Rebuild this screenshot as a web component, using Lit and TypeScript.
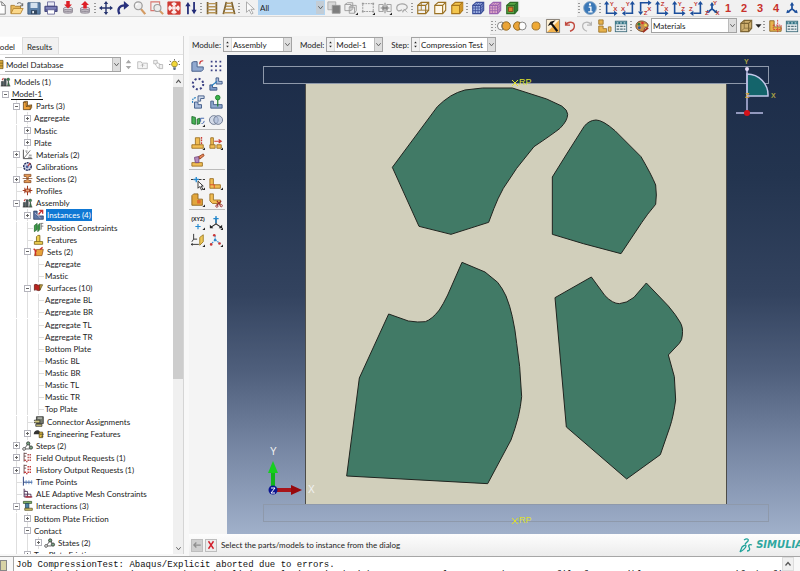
import { LitElement, html, svg, css, nothing, type TemplateResult } from "lit";
import { customElement, property } from "lit/decorators.js";
import { classMap } from "lit/directives/class-map.js";

type Drawing = TemplateResult;

/* ---- shared fragments used by several icons (16 x 16 grid) ---- */
const database = svg`
  <path d="M3 8.5v4.5c0 1.2 10 1.2 10 0V8.500z" fill="#c9c4cc" stroke="#77707c" stroke-width=".8"/>
  <ellipse cx="8" cy="8.500" rx="5" ry="1.500" fill="#e3dfe6" stroke="#77707c" stroke-width=".8"/>
  <path d="M3 11c0 1.200 10 1.200 10 0" fill="none" stroke="#77707c" stroke-width=".8"/>`;

const axesUp = (a: string, b: string) => svg`
  <path d="M3 14V3M2 14h10" stroke="#1c4f9c" stroke-width="1.800" fill="none"/>
  <path d="M0 4l3-4 3 4zM11.500 11l4 3-4 3z" fill="#1c4f9c"/>
  <text x="6.500" y="6" class="glyph">${a}</text><text x="10.500" y="11" class="glyph">${b}</text>`;
const axesLeft = (a: string, b: string) => svg`
  <path d="M13 14V3M14 14H5" stroke="#1c4f9c" stroke-width="1.800" fill="none"/>
  <path d="M10 4l3-4 3 4zM5 11l-4 3 4 3z" fill="#1c4f9c"/>
  <text x="5.500" y="6" class="glyph">${a}</text><text x="0" y="11" class="glyph">${b}</text>`;
const axesDown = (a: string, b: string) => svg`
  <path d="M3 2v10M2 2h10" stroke="#1c4f9c" stroke-width="1.800" fill="none"/>
  <path d="M0 12l3 4 3-4zM11.500-1l4 3-4 3z" fill="#1c4f9c"/>
  <text x="6.500" y="16" class="glyph">${a}</text><text x="10.500" y="11" class="glyph">${b}</text>`;
const cube = (fill: string, line: string) => svg`
  <path d="M2 5l4-3.500h8.500v9L11 14.500H2z" fill="${fill}" stroke="${line}" stroke-width="1.300"/>
  <path d="M2 5h9v9.500M11 5l3.500-3.500" fill="none" stroke="${line}" stroke-width="1.300"/>`;
const meshCube = (fill: string, line: string) => svg`
  ${cube(fill, line)}
  <path d="M5 5v9.500M8 5v9.500M2 8h9l3.500-3M2 11h9l3.500-3M5 5l3.500-3.500M8 5l3.500-3.500M12.800 3.500v9" fill="none" stroke="${line}" stroke-width=".9"/>`;
const triad = svg`
  <path d="M8 9V3M8 9l-4.500 3.500M8 9l4.500 3.500" stroke="#1c4f9c" stroke-width="2"/>
  <path d="M5.500 5L8 1l2.500 4zM1.500 14l1-4 3 3zM14.500 14l-1-4-3 3z" fill="#1c4f9c"/>`;
const table = svg`
  <rect x="1.500" y="2.500" width="13" height="12" fill="#e6edf0" stroke="#3f6d7c"/>
  <path d="M1.500 3h13v3h-13z" fill="#2f7385"/><path d="M3 4.500h2M7 4.500h2M11 4.500h2" stroke="#fff"/>
  <path d="M3 8.500h3M3 11.500h3M7 8.500h3M7 11.500h3M11 8.500h2M11 11.500h2" stroke="#54707a" stroke-width="1.500"/>`;
const more = svg`<path d="M16 13v3h-3z" fill="#222"/>`;
const columns = svg`
  <path d="M2 14V8h3v6zM6 14V4h3v10z" fill="#4a5a5f" stroke="#222" stroke-width=".7"/>
  <path d="M1 14.500h14" stroke="#222"/><path d="M3 6l2-3" stroke="#c43b3b" stroke-width="1.500"/>
  <path d="M11 14l1-7 2 7z" fill="#3c8c53" stroke="#222" stroke-width=".7"/><circle cx="12" cy="5" r="2" fill="#3c8c53" stroke="#222" stroke-width=".6"/>`;
const steps = svg`
  <path d="M4 12l5-7 4 6M5 13h6" stroke="#222" fill="none"/>
  <circle cx="3" cy="13" r="2" fill="#fff" stroke="#222"/><circle cx="9" cy="5" r="2.400" fill="#7aa383" stroke="#222"/>
  <circle cx="13" cy="11" r="2.400" fill="#7aa383" stroke="#222"/>`;
const request = (c: string) => svg`
  <path d="M3 1v13M3 2h4M3 6h3" stroke="#5a3a3a" fill="none" stroke-width="1.200"/>
  <path d="M8 4h6M8 8h6M8 12h6M6 14h2" stroke="${c}" stroke-width="2" stroke-dasharray="2 1"/>
  <path d="M3 12h3" stroke="${c}" stroke-width="2"/>`;
const partL = (fill: string, line: string) => svg`
  <path d="M2 3l2-1h4v6l6-1v4l-2 3H2z" fill="${fill}" stroke="${line}"/>
  <path d="M2 3.500h4v6h6V14M6 9.500l2-1.500M12 9.500l2-2" fill="none" stroke="${line}" stroke-width=".8"/>`;

const drawings: Record<string, Drawing> = {
  page: svg`<path d="M3 1h7l4 4v10H3z" fill="#fdfdfd" stroke="#777"/><path d="M10 1v4h4" fill="none" stroke="#777"/>`,
  open: svg`<path d="M1 14V5h4l1 1h6v3" fill="#e8b95c" stroke="#a97a2b"/><path d="M1 14.500L4 8.500h11l-3 6z" fill="#fbd88a" stroke="#b5832f"/><path d="M8 3c3-2 5-1 6 2M14.500 2.500v3h-3" fill="none" stroke="#555"/>`,
  save: svg`<path d="M1 2h14v13H1z" fill="#5c80a8" stroke="#39577a"/><path d="M4 2h8v6H4z" fill="#d4e1ee"/><path d="M4.500 10.500h7V15h-7z" fill="#33475f"/><path d="M6 11.500h2V14H6z" fill="#e3e9f0"/>`,
  print: svg`<path d="M4 1h8v5H4z" fill="#e9eaf5" stroke="#6a6a9a"/><path d="M1 6h14v6H1z" fill="#5a5d9c" stroke="#3c3f74"/><path d="M4 10h8v5H4z" fill="#fff" stroke="#6a6a9a"/><path d="M2 8h12" stroke="#a9abd8"/>`,
  dbDown: svg`${database}<path d="M6 0h4v4h2.500L8 8.500 3.500 4H6z" fill="#dd1f26"/>`,
  dbUp: svg`${database}<path d="M6 8.500h4v-4h2.500L8 0 3.500 4.500H6z" fill="#dd1f26"/>`,
  move: svg`<path d="M8 2v12M2 8h12" stroke="#27356f" stroke-width="1.600"/><path d="M5.500 3.500L8 0l2.500 3.500zM5.500 12.500L8 16l2.500-3.500zM3.500 5.500L0 8l3.500 2.500zM12.500 5.500L16 8l-3.500 2.500z" fill="#27356f"/>`,
  rotate: svg`<path d="M4 15C1 9 4 5 10 5" fill="none" stroke="#27307c" stroke-width="2.600"/><path d="M9 0l6 5-6 5z" fill="#27307c"/>`,
  zoom: svg`<path d="M9 9l5 6" stroke="#d49b63" stroke-width="2.600"/><circle cx="6" cy="5.500" r="4.500" fill="#ececec" stroke="#9d9d9d" stroke-width="1.400"/><path d="M3.500 5c.5-1.500 1.500-2 2.500-2" stroke="#fff" stroke-width="1.300" fill="none"/>`,
  zoomBox: svg`<path d="M1 1h10v10H1z" fill="none" stroke="#d8766f" stroke-width="1.200"/><path d="M11 11l4 4" stroke="#d49b63" stroke-width="2.400"/><circle cx="8.500" cy="8" r="4" fill="#ececec" stroke="#9d9d9d" stroke-width="1.300"/>`,
  fit: svg`<path d="M1 1h14v14H1z" fill="#fbeeec" stroke="#cf3a32"/><path d="M3 3l10 10M13 3L3 13" stroke="#cf3a32" stroke-width="2"/><path d="M1 1h6L1 7zM15 1v6L9 1zM1 15V9l6 6zM15 15H9l6-6z" fill="#cf3a32"/><path d="M6 6h4v4H6z" fill="#fbeeec"/>`,
  upDown: svg`<path d="M4.500 15V4M11.500 1v11" stroke="#222b77" stroke-width="2"/><path d="M1.500 6l3-5 3 5zM8.500 10l3 5 3-5z" fill="#222b77"/>`,
  ladder: svg`<path d="M3 1v14M13 1v14" stroke="#7d6230" stroke-width="2"/><path d="M3 3h10M3 6.500h10M3 10h10M3 13.500h10" stroke="#b89556" stroke-width="1.600"/>`,
  ladderFar: svg`<path d="M5 1L1.500 15M11 1l3.500 14" stroke="#7d6230" stroke-width="2"/><path d="M5 2.500h6M4.500 6h7M3 9.500h10M2 13.500h12" stroke="#b89556" stroke-width="1.600"/>`,
  cursor: svg`<path d="M4 1v12l3-3 2.500 5 2-1L9 9.500h4z" fill="#fafafa" stroke="#a3a3a3"/>`,
  squares: svg`<path d="M1 1h9v9H1z" fill="#d9d9d9" stroke="#aaa"/><path d="M6 5h9v9H6z" fill="#7e7e7e" stroke="#999"/>`,
  boxes: svg`<path d="M1 4l3-2h6v7l-2 2H1zM6 7l2-2h6v6l-2 3H6z" fill="#efefef" stroke="#999"/><path d="M1 4h7v7M6 7h6v7" fill="none" stroke="#999"/>${more}`,
  dashed: svg`<path d="M2 3h12v9H2z" fill="none" stroke="#8f8f8f" stroke-dasharray="2 1"/><path d="M1 2h2v2H1zM13 2h2v2h-2zM1 11h2v2H1zM13 11h2v2h-2z" fill="#999"/>${more}`,
  pair: svg`<path d="M1 4h5v8H1zM10 4h5v8h-5z" fill="none" stroke="#999"/><path d="M3 8h10M8 2v12" stroke="#777"/><path d="M5 5l3 3-3 3zM11 5L8 8l3 3z" fill="#888"/>${more}`,
  lasso: svg`<path d="M2 8c0-6 12-6 12-1 0 4-6 2-5 6M2 8c0 4 3 4 6 2" fill="none" stroke="#a5a5a5" stroke-width="1.400"/><path d="M10 9l4 4" stroke="#a5a5a5"/>`,
  cubeWire: svg`${cube("none", "#9b7224")}<path d="M6 1.500v9H2.500M6 10.500h8.500" fill="none" stroke="#9b7224"/>`,
  cubeHidden: cube("#fff8e8", "#9b7224"),
  cubeSolid: svg`${cube("#f3c64e", "#a8761c")}<path d="M11.500 5l3-3v8l-3 3.500z" fill="#cf9426"/>`,
  meshBlue: meshCube("#9fb2e4", "#3a4d98"),
  meshPurple: meshCube("#e0a9c6", "#9a62b0"),
  meshGreen: svg`${cube("#55a544", "#2d6b25")}<path d="M4 7h5v5H4z" fill="#d8812d" stroke="#8a3e18"/><path d="M11.500 5l3-3v8l-3 3.500z" fill="#2f7a32"/>`,
  info: svg`<circle cx="8" cy="8" r="7.300" fill="#3a78b8" stroke="#8ba9c6"/><path d="M6.500 7H9v5M6 12.500h5" stroke="#fff" stroke-width="1.500" fill="none"/><circle cx="8" cy="4" r="1.300" fill="#fff"/>`,
  viewXY: axesUp("Y", "X"), viewYX: axesLeft("Y", "X"), viewXZ: axesDown("Z", "X"),
  viewZX: axesUp("Z", "X"), viewYZ: axesUp("Y", "Z"), viewZY: axesLeft("Y", "Z"),
  iso: svg`${triad}<text x="9" y="5" class="glyph">Y</text><text x="0" y="16" class="glyph">Z</text><text x="12" y="16" class="glyph">X</text>`,
  triad,
  unionRight: svg`<circle cx="5" cy="8" r="4.500" fill="#fdfdfd" stroke="#777"/><circle cx="10.500" cy="8" r="4.800" fill="#eaa437" stroke="#8a6420"/><path d="M7 4.500c-2 2-2 5 0 7" stroke="#666" fill="none"/>`,
  unionLeft: svg`<circle cx="10.500" cy="8" r="4.500" fill="#fdfdfd" stroke="#777"/><path d="M8 4A4.800 4.800 0 1 0 8 12C6.500 10 6.500 6 8 4z" fill="#eaa437" stroke="#8a6420"/>`,
  disc: svg`<circle cx="8" cy="8" r="4.600" fill="#efa935" stroke="#916a2b"/>`,
  pick: svg`<path d="M.5.500h15v15H.5z" fill="#f2b24c" stroke="#777"/><path d="M1 1h14L1 15z" fill="#fdf0d4"/><path d="M13 14L6 5" stroke="#111" stroke-width="2.400"/><path d="M2 8l3-5 6-1.500L6.500 6z" fill="#111"/>`,
  undo: svg`<path d="M3 3v4h5M3 7c3-5 10-4 10 1 0 3-2 5-5 6" fill="none" stroke="#c14a3f" stroke-width="1.600"/>`,
  redo: svg`<path d="M13 3v4H8M13 7C10 2 3 3 3 8c0 3 2 5 5 6" fill="none" stroke="#b7b7b7" stroke-width="1.400"/>`,
  partsSet: svg`<path d="M2 1h5v5H2zM2 8h5v3h4v4H2z" fill="#e7b24b" stroke="#9c742b"/><path d="M13 9h3v5h-3z" fill="#efc469" stroke="#9c742b"/>`,
  table,
  palette: svg`<path d="M1 8C1 3 7 1 11 3c5 2 5 6 2 7-2 0-3 1-2 3 0 3-10 1-10-5z" fill="#c98f4d" stroke="#6b4420"/><circle cx="4.500" cy="6" r="1.600" fill="#2d7a3a"/><circle cx="8.500" cy="4.500" r="1.500" fill="#d8322a"/><circle cx="5" cy="10" r="1.600" fill="#2852a5"/><circle cx="12" cy="7" r="1.400" fill="#f2e04c"/><path d="M9 15l6-5" stroke="#a02d20" stroke-width="2"/>`,
  cubeTan: svg`${cube("#cfb070", "#7d6534")}<path d="M6 1.500v9l-4 4M6 10.500h8.500" stroke="#7d6534" fill="none" stroke-width=".8"/>`,
  cutPart: svg`<path d="M2 2h5v7h8v5H2z" fill="#e7b24b" stroke="#8a6526"/><path d="M11 1v14M6 7h9v5H6z" stroke="#d23c32" fill="none" stroke-dasharray="2 1"/>`,
  models: columns,
  part: svg`${partL("#efa23a", "#4f3410")}`,
  material: svg`<path d="M2 1v13h13" stroke="#333" fill="none" stroke-width="1.200"/><path d="M3 13L12 2M5 3h3M9 12h5M10 9h4M6 5l2 1" stroke="#444" fill="none"/>`,
  calibration: svg`<circle cx="8" cy="8" r="5.500" fill="#cfd6ea" stroke="#27305f" stroke-width="2" stroke-dasharray="3 1"/><path d="M8 8l4-5" stroke="#c32b2b" stroke-width="1.500"/><circle cx="7.500" cy="8.500" r="2" fill="#4b5d9a"/>`,
  section: svg`<path d="M3 2h10v3h-3l-1 2v3l1 1h3v3H3v-3h3l1-1V7L6 5H3z" fill="#e59b54" stroke="#7b3d19"/><path d="M1 8h14" stroke="#7b3d19"/>`,
  profile: svg`<path d="M8 1v14M1 8h14" stroke="#a13a1f" stroke-width="1.500"/><path d="M4 4v8M12 4v8M5 6h6v4H5z" fill="#e8a276" stroke="#a13a1f" stroke-width="1.300"/>`,
  instance: svg`<path d="M1 3h5v7h9v5H1z" fill="#5d76a5" stroke="#1f2f55"/><path d="M8 8l5-6M9 2h5v5" stroke="#c23434" stroke-width="2" fill="none"/><path d="M3 6l8 7" stroke="#d9d4e9"/>`,
  constraint: svg`<path d="M2 5l4-3v9l-4 3zM7 5l3-3v9l-3 3z" fill="#3d9f4a" stroke="#1d5c28"/><path d="M11 2h4M12 2v9M12 6h3" stroke="#555" fill="none"/>`,
  feature: svg`<path d="M2 11h12v4H2zM5 11V4l2-2h3v9" fill="#f0d054" stroke="#7c6517" stroke-width="1.200"/>`,
  set: svg`<path d="M2 14L5 5h10l-2 9z" fill="#e7a23a" stroke="#8f4c17"/><path d="M1 4l4 4M4 14L3 5M10 5l4-3" stroke="#c9302a" stroke-width="2"/>`,
  surface: svg`<path d="M2 4c3-2 5 2 8 0v8c-3 2-5-2-8 0z" fill="#b8241f" stroke="#5d120f"/><path d="M10 4h4l-4 8z" fill="#d6b34d" stroke="#54420f"/>`,
  connector: svg`<path d="M5 1h10v10H5z" fill="#777c70" stroke="#222"/><path d="M2 6h8v4H2zM4 12h9v3H4z" fill="#d0c77e" stroke="#222"/><path d="M7 3h6M0 8h3" stroke="#fff"/>`,
  engineering: svg`<path d="M1 9c0-6 8-8 9-3v3z" fill="#333"/><path d="M9 6h5v8H9z" fill="#e3be3e" stroke="#433609"/><path d="M10 9h6M12 12h3" stroke="#333"/>`,
  steps, field: request("#b34848"), history: request("#c02f2f"),
  time: svg`<path d="M2 1v13M2 9h13" stroke="#27407c" fill="none" stroke-width="1.400"/><path d="M6 6v6M10 6v6M14 6v6" stroke="#4b7fc3"/>`,
  mesh: svg`<path d="M3 1v12h12M3 5h5v8M3 9h10v4" stroke="#4a3350" fill="#c9aeca" stroke-width="1.200"/><path d="M5 13h9" stroke="#b6303e" stroke-width="2"/>`,
  interaction: svg`<path d="M2 2h12v3H2z" fill="#86b46a" stroke="#2c4a22"/><path d="M5 5h5v7H5z" fill="#4c84a4" stroke="#1b3d50"/><path d="M4 12h11v3H4z" fill="#cfc56a" stroke="#4e481a"/>`,
  spin: svg`<path d="M4 6l4-5 4 5zM4 10l4 5 4-5z" fill="#a8a8a8"/>`,
  folderUp: svg`<path d="M1 4h5l1 2h8v8H1z" fill="#f4f4f4" stroke="#a9a9a9"/><path d="M8 12V8M6 9.500l2-2 2 2" stroke="#999" fill="none"/>`,
  filter: svg`<path d="M1 2h5v5H1zM9 8h5v6H9z" fill="#f0f0f0" stroke="#aaa"/><path d="M6 5l5 3M3 7l4 6h2" stroke="#aaa" fill="none"/>`,
  bulb: svg`<path d="M8 0v2M1 3l2 1M15 3l-2 1M0 8h2M14 8h2" stroke="#333"/><path d="M8 3a4.500 4.500 0 0 1 2.500 8h-5A4.500 4.500 0 0 1 8 3z" fill="#f2d83a" stroke="#7c6a14"/><path d="M6 13h4M6.500 15h3" stroke="#27405d" stroke-width="1.500"/>`,
  stack: svg`<path d="M4 2h12v12H4z" fill="#d9a93b" stroke="#6b5117"/><path d="M4 6h12M4 10h12" stroke="#6b5117"/>`,
  tInstance: svg`<path d="M1 4l2-1h4v6h7v3l-2 2H1z" fill="#91a9cf" stroke="#3c5684"/><path d="M10 6c0-3 1-4 4-4" stroke="#c93636" stroke-width="1.300" fill="none"/>`,
  tLinear: svg`<g fill="#3b4184"><path d="M2 2h2v2H2zM7 2h2v2H7zM12 2h2v2h-2zM2 7h2v2H2zM7 7h2v2H7zM12 7h2v2h-2zM2 12h2v2H2zM7 12h2v2H7zM12 12h2v2h-2z"/></g>`,
  tRadial: svg`<circle cx="8" cy="8" r="6" fill="none" stroke="#3b4184" stroke-width="2.300" stroke-dasharray="2.300 2.400"/>`,
  tTranslate: svg`<path d="M8 1h3v4h4v3H8z" fill="#a9bcdb" stroke="#3c5684"/><path d="M1 9h3v3h5v3H1z" fill="#7f9cc9" stroke="#3c5684"/><path d="M3 10l6-5" stroke="#237ec0" stroke-width="1.300"/>`,
  tRotate: svg`<path d="M8 1h7v3h-4v3H8z" fill="#cfdaea" stroke="#3c5684"/><path d="M4 8h4v3h4v4H4z" fill="#a9bcdb" stroke="#3c5684"/><path d="M2 9c-1-4 1-6 4-6" stroke="#237ec0" stroke-width="1.300" stroke-dasharray="2 1" fill="none"/>`,
  tPoint: svg`<path d="M2 7h3v4h10v4H2z" fill="#91a9cf" stroke="#3c5684"/><path d="M10 5v8" stroke="#1a7a2a" stroke-width="1.300"/><circle cx="10" cy="3" r="2.600" fill="#3cb44a" stroke="#1a7a2a"/>`,
  tConstraint: svg`<path d="M1 4l4 1v8l-4-1z" fill="#49b356" stroke="#1d6b2a"/><path d="M7 7l3-1v6l-3 1z" fill="#49b356" stroke="#1d6b2a"/><path d="M11 10V6h4M12 12c2 0 3-1 3-3" stroke="#335aa8" fill="none"/>${more}`,
  tMerge: svg`<circle cx="5.500" cy="8" r="5" fill="#d4dbe8" stroke="#66728c"/><circle cx="10.500" cy="8" r="5" fill="#a9b8d6" fill-opacity=".6" stroke="#66728c"/>`,
  tExtrude: svg`<path d="M1 10h13v4H1zM5 10V2h5v8" fill="#f1bd53" stroke="#9a6f22"/><path d="M12 1v8" stroke="#cb3b34" stroke-dasharray="2 1" stroke-width="1.500"/>${more}`,
  tExtend: svg`<path d="M1 10h6v4H1zM2 10V2h3v8M9 10h5v4H9z" fill="#f1bd53" stroke="#9a6f22"/><path d="M6 6h7M11 4l3 2-3 2" stroke="#cb3b34" fill="none" stroke-width="1.300"/>${more}`,
  tSweep: svg`<path d="M1 11h12v4H1z" fill="#f1bd53" stroke="#9a6f22"/><path d="M4 5l5-1v7H5z" fill="#b58bbd" stroke="#74477d"/><path d="M9 4l5-3 1 2-5 4z" fill="#e5895b" stroke="#96421e"/>`,
  tDatum: svg`<path d="M0 4h16" stroke="#222" stroke-dasharray="3 1.500"/><path d="M6 1v6M3 4h6" stroke="#2489cf" stroke-width="1.500"/><path d="M8 6v8l2-2 2 4 1.500-1-2-3.500H14z" fill="#fff" stroke="#222"/>${more}`,
  tPartition: svg`<path d="M1 3h4v7h8v4H1z" fill="#f1bd53" stroke="#9a6f22"/><path d="M1 10h5v4" stroke="#d9482b" fill="none"/>${more}`,
  tCell: svg`<path d="M1 3l2-2h5v6h5v7H1z" fill="#e2a63c" stroke="#8d6119"/><path d="M7 8h4v4H7z" fill="#e0672f"/>${more}`,
  tCut: svg`<path d="M1 1h4v7h8v4H4L1 9z" fill="#f1bd53" stroke="#9a6f22"/><path d="M9 9l4 5M14 9l-5 5" stroke="#9c2f2b" stroke-width="1.300"/><circle cx="9" cy="15" r="1.300" fill="none" stroke="#9c2f2b"/><circle cx="14" cy="14.500" r="1.300" fill="none" stroke="#9c2f2b"/>`,
  tXyz: svg`<text x="8" y="6" text-anchor="middle" class="xyz">(XYZ)</text><path d="M8 9v6M5 12h6" stroke="#2489cf" stroke-width="1.300"/>${more}`,
  tAxis: svg`<path d="M8 9V2M8 9l-6 4M8 9l6 4" stroke="#222" stroke-width="1.300"/><path d="M8 0v8M5 3h6" stroke="#2489cf" stroke-width="1.500"/><path d="M1 10v4h4zM15 10v4h-4z" fill="#222"/>${more}`,
  tPlane: svg`<path d="M3 1v6l-2 3M3 7h4M1 13h8M2 12l-2 1 2 1" stroke="#222" fill="none"/><path d="M10 5l4-3v8l-4 4z" fill="#efc655" stroke="#9a7a22"/>${more}`,
  tCsys: svg`<path d="M7 8V2M7 8l-5 5M7 8l6 4" stroke="#2f8bd0" stroke-width="1.200" stroke-dasharray="2 1"/><circle cx="6" cy="2.500" r="1.500" fill="#c93636"/><circle cx="7" cy="8" r="1.500" fill="#2f8bd0"/><circle cx="2.500" cy="13" r="1.500" fill="#c93636"/><circle cx="12" cy="12" r="1.500" fill="#c93636"/>${more}`,
  back: svg`<path d="M7 4L3 8l4 4M3 8h11" stroke="#8e8e8e" stroke-width="2" fill="none"/>`,
  cancel: svg`<path d="M4 2l8 12M12 2L4 14" stroke="#d21f2b" stroke-width="2.200"/>`,
  caret: svg`<path d="M1 5h14l-7 8z" fill="#222"/>`,
  chevron: svg`<path d="M3 5l5 6 5-6" fill="none" stroke="#555" stroke-width="2"/>`,
  chevronUp: svg`<path d="M3 11l5-6 5 6" fill="none" stroke="#555" stroke-width="2.500"/>`,
  stepper: svg`<path d="M5 5l3-4 3 4zM5 11l3 4 3-4z" fill="#222"/>`,
};

const icon = (name: string) => html`<svg class="icon" viewBox="0 0 16 16" aria-hidden="true">${drawings[name]}</svg>`;

const base = css`
  :host { display: block; box-sizing: border-box; }
  * { box-sizing: border-box; }
  button { font: inherit; color: inherit; border: 0; padding: 0; margin: 0; background: none; display: flex; align-items: center; justify-content: center; flex: none; }
  .icon { display: block; width: 14px; height: 14px; flex: none; overflow: visible; }
  .glyph { font: bold 7px "Liberation Sans", sans-serif; fill: #c23b36; }
  .xyz { font: bold 6px "Liberation Sans", sans-serif; fill: #222; }
`;

@customElement("drop-list")
class DropList extends LitElement {
  @property() label = "";
  @property() value = "";
  @property({ type: Boolean }) stepper = false;
  @property({ type: Boolean, reflect: true }) picked = false;
  static styles = [base, css`
    :host { display: flex; height: 15px; border: 1px solid #a3a3a3; background: #fff; min-width: 0; }
    :host([picked]) { background: #b3d5f2; border-color: #b3d5f2; }
    .icon { width: 7px; height: 13px; }
    .step { border-right: 1px solid #ddd; background: #f1f1f1; }
    select { appearance: none; flex: 1; min-width: 0; border: 0; margin: 0; padding: 0 1px; font: inherit; color: inherit; background: none; outline: 0; }
    .arrow { background: #dedede; border-left: 1px solid #bbb; pointer-events: none; }
    :host([picked]) .arrow { background: #c3cdd6; border-color: #c3cdd6; }
  `];
  render() {
    return html`
      ${this.stepper ? html`<span class="step">${icon("stepper")}</span>` : nothing}
      <select aria-label=${this.label}><option>${this.value}</option></select>
      <span class="arrow">${icon("chevron")}</span>`;
  }
}

@customElement("tool-strip")
class ToolStrip extends LitElement {
  @property({ attribute: false }) tools: string[] = [];
  @property({ type: Boolean, reflect: true }) tight = false;
  static styles = [base, css`
    :host { display: flex; flex: none; align-items: center; }
    button { width: 17px; height: 16px; }
    :host([tight]) button { width: 16px; }
    .digit { font: bold 11px "Liberation Sans", sans-serif; color: #c8322c; }
  `];
  render() {
    return this.tools.map((t) => /^\d$/.test(t)
      ? html`<button class="digit" aria-label="View ${t}">${t}</button>`
      : html`<button aria-label=${t}>${icon(t)}</button>`);
  }
}

type Box = "+" | "-" | "";
interface Node { depth: number; box: Box; text: string; icon?: string; picked?: boolean; current?: boolean; }
const n = (depth: number, box: Box, text: string, iconName?: string): Node => ({ depth, box, text, icon: iconName });
const nodes: Node[] = [
  { ...n(0, "-", "Model-1"), current: true },
  n(1, "-", "Parts (3)", "part"), n(2, "+", "Aggregate"), n(2, "+", "Mastic"), n(2, "+", "Plate"),
  n(1, "+", "Materials (2)", "material"), n(1, "", "Calibrations", "calibration"),
  n(1, "+", "Sections (2)", "section"), n(1, "", "Profiles", "profile"),
  n(1, "-", "Assembly", "models"),
  { ...n(2, "+", "Instances (4)", "instance"), picked: true },
  n(2, "", "Position Constraints", "constraint"), n(2, "", "Features", "feature"),
  n(2, "-", "Sets (2)", "set"), n(3, "", "Aggregate"), n(3, "", "Mastic"),
  n(2, "-", "Surfaces (10)", "surface"),
  ...["Aggregate BL", "Aggregate BR", "Aggregate TL", "Aggregate TR", "Bottom Plate",
    "Mastic BL", "Mastic BR", "Mastic TL", "Mastic TR", "Top Plate"].map((t) => n(3, "", t)),
  n(2, "", "Connector Assignments", "connector"), n(2, "+", "Engineering Features", "engineering"),
  n(1, "+", "Steps (2)", "steps"), n(1, "+", "Field Output Requests (1)", "field"),
  n(1, "+", "History Output Requests (1)", "history"), n(1, "", "Time Points", "time"),
  n(1, "", "ALE Adaptive Mesh Constraints", "mesh"), n(1, "-", "Interactions (3)", "interaction"),
  n(2, "+", "Bottom Plate Friction"), n(2, "-", "Contact"), n(3, "+", "States (2)", "steps"),
  n(2, "+", "Top Plate Friction"),
];

@customElement("model-tree")
class ModelTree extends LitElement {
  static styles = [base, css`
    :host { display: flex; flex-direction: column; flex: 1; min-height: 0; border-right: 1px solid #d5d5d5; background: #fff; }
    .tabs { display: flex; height: 18px; flex: none; background: #fafafa; align-items: flex-end; padding-top: 1px; }
    .tab { height: 17px; padding: 2px 6px 0 4px; background: #f1f1f1; border: 1px solid #dedede; border-bottom: 0; }
    .tab.active { width: 22px; background: #fff; justify-content: flex-end; border-color: transparent; }
    .bar { display: flex; align-items: center; height: 20px; flex: none; border-top: 1px solid #e3e3e3; padding-right: 1px; }
    .bar drop-list { flex: 1; margin-left: 2px; margin-right: 1px; border-left: 0; }
    .bar button { width: 16px; height: 16px; }
    .bar .first { width: 12px; }
    .bar .icon { width: 11px; height: 11px; }
    .lead { margin-left: -8px; }
    .view { display: flex; flex: 1; min-height: 0; border-top: 1px solid #cfcfcf; }
    .clip { flex: 1; overflow: hidden; min-width: 0; }
    .rows { list-style: none; margin: 0; padding: 1px 0 0; min-height: calc(100% + 7px); display: flex; flex-direction: column; justify-content: space-between; }
    .row { display: flex; align-items: stretch; height: 12px; line-height: 12px; white-space: nowrap; }
    .cell { width: 11px; flex: none; display: flex; align-items: center; justify-content: center; background: linear-gradient(90deg, transparent 5px, #dedede 5px, #dedede 6px, transparent 6px); }
    .cell.bare { background: none; }
    .cell.leaf { background: linear-gradient(#dedede, #dedede) 6px 6px / 5px 1px no-repeat, linear-gradient(90deg, transparent 5px, #dedede 5px, #dedede 6px, transparent 6px); }
    .box { width: 7px; height: 7px; border: 1px solid #b4b4bc; background: linear-gradient(#666, #666) 50% 50% / 3px 1px no-repeat, #fff; }
    .box.plus { background: linear-gradient(#666, #666) 50% 50% / 3px 1px no-repeat, linear-gradient(#666, #666) 50% 50% / 1px 3px no-repeat, #fff; }
    .row .icon { width: 11px; height: 11px; margin-right: 2px; }
    .name { padding: 0 1px; }
    .current { border-bottom: 1px solid #111; }
    .picked { background: #0f78d4; color: #fff; }
    .scroll { width: 10px; flex: none; display: flex; flex-direction: column; background: #f0f0f0; }
    .scroll button { height: 12px; width: 10px; }
    .scroll button:last-child { margin-top: auto; }
    .scroll .icon { width: 7px; height: 7px; }
    .thumb { height: 61%; background: #cdcdcd; }
  `];
  render() {
    return html`
      <div class="tabs" role="tablist">
        <button class="tab active" role="tab" aria-selected="true">Model</button>
        <button class="tab" role="tab" aria-selected="false">Results</button>
      </div>
      <div class="bar">
        <span class="lead">${icon("stack")}</span>
        <drop-list label="Database" value="Model Database"></drop-list>
        <button class="first" aria-label="Cycle">${icon("spin")}</button>
        <button aria-label="Up">${icon("folderUp")}</button>
        <button aria-label="Filter">${icon("filter")}</button>
        <button aria-label="Tips">${icon("bulb")}</button>
      </div>
      <div class="view">
        <div class="clip">
          <ul class="rows" role="tree">
            <li class="row" role="treeitem">${icon("models")}<span class="name">Models (1)</span></li>
            ${nodes.map((r) => html`<li class="row" role="treeitem">
              ${Array.from({ length: r.depth }, (_, i) => html`<span class=${classMap({ cell: true, bare: i === 0 })}></span>`)}
              <span class=${classMap({ cell: true, bare: r.depth === 0, leaf: !r.box })}>
                ${r.box ? html`<span class=${classMap({ box: true, plus: r.box === "+" })}></span>` : nothing}
              </span>
              ${r.icon ? icon(r.icon) : nothing}
              <span class=${classMap({ name: true, picked: !!r.picked, current: !!r.current })}>${r.text}</span>
            </li>`)}
          </ul>
        </div>
        <div class="scroll">
          <button aria-label="Scroll up">${icon("chevronUp")}</button>
          <div class="thumb"></div>
          <button aria-label="Scroll down">${icon("chevron")}</button>
        </div>
      </div>`;
  }
}

@customElement("model-scene")
class ModelScene extends LitElement {
  static styles = [base, css`
    :host { min-width: 0; min-height: 0; overflow: hidden; background: linear-gradient(#1b2b48 0%, #23344f 25%, #33435f 50%, #4f5f7c 66%, #7686a3 82%, #a0b0ca 100%); }
    .scene { display: block; width: 100%; height: 100%; }
    .aggregate { fill: #417a66; stroke: #20241f; stroke-width: 1; vector-effect: non-scaling-stroke; }
    .plate { fill: none; stroke: #8e99ab; }
    .rp { font: 9px "Liberation Sans", sans-serif; fill: #dde02c; }
    .axis { font: 10px "Liberation Sans", sans-serif; fill: #f2f2f2; }
    .mini { font: bold 7px "Liberation Sans", sans-serif; fill: #a9a043; }
    .mini.z { fill: #d8a030; }
  `];
  render() {
    return html`<svg class="scene" viewBox="227 55 573 479" preserveAspectRatio="xMidYMid slice" role="img" aria-label="Assembly model">
      <rect x="305.500" y="84" width="421" height="420" fill="#d1cfbb"/>
      <path d="M305.500 84v420M726.500 84v420" stroke="#4c4c48"/>
      <rect class="plate" x="263.500" y="66.500" width="505" height="17"/>
      <rect class="plate" x="263.500" y="504.500" width="505" height="17" stroke="#a9b3b8"/>
      <g transform="translate(380 60) scale(.33333)">
        <path class="aggregate" d="M37 322L172 140Q190 122 212 108Q232 96 255 90L308 84H397L500 117L545 138Q563 150 563 163Q563 182 540 205Q520 221 462 260L410 325L370 385Q352 418 342 445L326 487L213 523L117 499Z"/>
        <path class="aggregate" d="M517 351L560 282L612 200Q626 181 648 180Q668 180 705 212L783 290Q815 345 827 375L829 405L827 433Q800 465 785 488L723 581L610 551L517 523Z"/>
      </g>
      <g transform="translate(330 250) scale(.33333)">
        <path class="aggregate" d="M176 192L235 213Q265 218 286 215Q306 208 328 180Q340 162 353 135L396 37L465 66L503 97Q518 116 528 138Q540 168 547 200Q556 240 560 280L569 350L575 440Q572 470 565 500Q556 535 543 570L473 701L50 678L88 384Z"/>
        <path class="aggregate" d="M675 143L784 81L825 137Q848 161 868 161Q890 160 912 142L949 99L1015 168Q1038 195 1050 216Q1060 232 1057 255Q1057 270 1048 280L1015 315L1033 380L1037 450Q1030 500 1020 530L991 614L890 687L709 531Z"/>
      </g>
      <path d="M512 80l6 6M518 80l-6 6M512 518l6 6M518 518l-6 6" stroke="#dde02c"/>
      <text class="rp" x="519" y="85">RP</text><text class="rp" x="519" y="523">RP</text>
      <path d="M747 96V74A21 21 0 0 1 768 96z" fill="#14646b" stroke="#c4c9ea" stroke-width="1.500"/>
      <path d="M747 69v44M736 113h27" stroke="#b9bce4" stroke-width="1.500"/>
      <circle cx="747" cy="69" r="2" fill="#e6dcf8"/><circle cx="747" cy="113" r="3" fill="#d4121a"/>
      <text class="mini" x="744" y="64">Y</text><text class="mini" x="771" y="98">X</text><text class="mini z" x="745" y="98">Z</text>
      <path d="M273 490v-19" stroke="#12b51b" stroke-width="4"/><path d="M268 473l5-12 5 12z" fill="#17cf20"/>
      <path d="M273 490h20" stroke="#a8141a" stroke-width="4"/><path d="M291 485l11 5-11 5z" fill="#98080c"/>
      <circle cx="273" cy="490" r="4.500" fill="#0a1592"/><path d="M271 488h4l-4 5h4" fill="none" stroke="#fff"/>
      <text class="axis" x="270" y="455">Y</text><text class="axis" x="308" y="493">X</text>
    </svg>`;
  }
}

@customElement("app-root")
class AppRoot extends LitElement {
  static styles = [base, css`
    :host { display: grid; grid-template-rows: 17px minmax(0, 1fr) 15px; height: 100vh; overflow: hidden; background: #f8f8f8; color: #222; font: 8px/12px Lato, "Open Sans", sans-serif; font-variant-ligatures: none; }
    .strip { display: flex; align-items: center; height: 17px; overflow: hidden; }
    .panel { display: flex; align-items: center; height: 17px; background: #f1f1f1; border-bottom: 1px solid #d6d6d6; }
    .main { margin-left: -9px; padding-bottom: 1px; }
    .views { margin-left: auto; }
    .grip { width: 4px; height: 12px; flex: none; background: radial-gradient(circle, #999 1px, transparent 1px) 0 0 / 4px 3px; }
    .grip.wide { width: 6px; }
    .all { width: 67px; }
    .body { display: grid; grid-template-columns: 184px minmax(0, 1fr); min-height: 0; }
    .side { display: flex; flex-direction: column; min-height: 0; padding: 19px 0 2px; }
    .work { display: grid; grid-template-rows: 19px 19px minmax(0, 1fr) 22px; min-height: 0; padding-left: 5px; }
    .second { justify-self: end; height: 18px; }
    .materials { width: 86px; margin-left: 1px; }
    .caret { width: 8px; height: 16px; }
    .caret .icon { width: 7px; height: 7px; }
    .context { display: flex; align-items: center; padding: 0 0 2px 3px; background: #f3f3f3; }
    .module { width: 69px; margin: 0 8px 0 2px; }
    .model { width: 57px; margin: 0 8px 0 2px; }
    .step { width: 85px; margin-left: 2px; }
    .stage { display: grid; grid-template-columns: 38px minmax(0, 1fr); min-height: 0; }
    .toolbox { background: #f4f4f4; padding: 2px 2px 0 0; }
    .tools { display: grid; grid-template-columns: 18px 18px; grid-auto-rows: 18px; border-bottom: 1px solid #bbb; }
    .tools.short { grid-auto-rows: 17px; padding: 4px 0 1px; }
    .tools:last-child { border-bottom: 0; }
    .status { display: flex; align-items: center; padding-left: 2px; background: linear-gradient(#fdfdfd, #ececec); }
    .status button { width: 12px; height: 13px; margin-right: 2px; border: 1px solid #bdbdbd; background: #ececec; }
    .status .back { background: #cfcfcf; }
    .status .icon { width: 10px; height: 10px; }
    .hint { margin-left: 2px; }
    .brand { display: flex; align-items: center; margin-left: auto; margin-right: -3px; gap: 3px; color: #2fa79f; font: italic bold 10px/12px "DejaVu Sans", sans-serif; }
    .brand .mark { width: 14px; height: 15px; display: block; }
    .output { display: grid; grid-template-columns: 13px minmax(0, 1fr) 12px 6px; border-top: 1px solid #a6a6a6; min-height: 0; overflow: hidden; }
    .prompt { background: #d8d3a6; border: 1px solid #888; margin-top: 3px; width: 7px; }
    .log { margin: 0; padding: 3px 0 0 2px; background: #fff; border-left: 1px solid #a6a6a6; overflow: hidden; font: 9px/10px "Liberation Mono", monospace; color: #111; }
    .more { background: #f0f0f0; border: 1px solid #ddd; }
    .more .icon { width: 8px; height: 8px; }
  `];

  render() {
    const grip = html`<span class="grip"></span>`;
    return html`
      <header class="strip">
        <div class="panel main">
          <tool-strip .tools=${["page", "open", "save", "print", "dbDown", "dbUp"]}></tool-strip>${grip}
          <tool-strip .tools=${["move", "rotate", "zoom", "zoomBox", "fit", "upDown"]}></tool-strip>${grip}
          <tool-strip .tools=${["ladder", "ladderFar"]}></tool-strip>${grip}
          <tool-strip .tools=${["cursor"]}></tool-strip>
          <drop-list class="all" label="Selection filter" value="All" picked></drop-list>
          <tool-strip .tools=${["squares", "boxes", "dashed", "pair", "lasso"]}></tool-strip>${grip}
          <tool-strip .tools=${["cubeWire", "cubeHidden", "cubeSolid"]}></tool-strip>${grip}
          <tool-strip .tools=${["meshBlue", "meshPurple", "meshGreen"]}></tool-strip>
        </div>
        <div class="panel views">
          ${grip}<tool-strip .tools=${["info"]}></tool-strip>${grip}
          <tool-strip .tools=${["viewXY", "viewYX", "viewXZ", "viewZX", "viewYZ", "viewZY"]}></tool-strip>
          <tool-strip tight .tools=${["iso", "1", "2", "3", "4", "triad"]}></tool-strip>
        </div>
      </header>

      <div class="body">
        <aside class="side"><model-tree></model-tree></aside>
        <main class="work">
          <div class="panel second">
            <span class="grip wide"></span>
            <tool-strip tight .tools=${["unionRight", "unionLeft", "disc"]}></tool-strip>
            <tool-strip .tools=${["pick", "undo", "redo", "partsSet", "table"]}></tool-strip>${grip}
            <tool-strip .tools=${["palette"]}></tool-strip>
            <drop-list class="materials" label="Color code" value="Materials"></drop-list>
            <tool-strip .tools=${["cubeTan"]}></tool-strip>
            <button class="caret" aria-label="Render options">${icon("caret")}</button>${grip}
            <tool-strip .tools=${["cutPart", "table"]}></tool-strip>
          </div>
          <div class="context">
            <span>Module:</span><drop-list class="module" stepper label="Module" value="Assembly"></drop-list>
            <span>Model:</span><drop-list class="model" stepper label="Model" value="Model-1"></drop-list>
            <span>Step:</span><drop-list class="step" stepper label="Step" value="Compression Test"></drop-list>
          </div>
          <div class="stage">
            <nav class="toolbox" aria-label="Assembly tools">
              ${[["tInstance", "tLinear", "tRadial", "tTranslate", "tRotate", "tPoint", "tConstraint", "tMerge"],
                ["tExtrude", "tExtend", "tSweep"],
                ["tDatum", "tPartition", "tCell", "tCut"],
                ["tXyz", "tAxis", "tPlane", "tCsys"]].map((g, i) => html`
                <div class=${classMap({ tools: true, short: i > 0 })}>
                  ${g.map((t) => html`<button aria-label=${t.slice(1)}>${icon(t)}</button>`)}
                </div>`)}
            </nav>
            <model-scene></model-scene>
          </div>
          <div class="status">
            <button class="back" aria-label="Back">${icon("back")}</button>
            <button aria-label="Cancel">${icon("cancel")}</button>
            <span class="hint">Select the parts/models to instance from the dialog</span>
            <span class="brand">
              <svg class="mark" viewBox="0 0 14 15" aria-hidden="true" fill="none" stroke="#1fa29a" stroke-width="1.300">
                <path d="M5 2c3-2 5-1 4 1L6 6M1 14c2-1 6-4 6-6S4 8 3 9l-2 5M13 7c-2-1-4 0-3 2s1 4-2 4"/>
              </svg>SIMULIA</span>
          </div>
        </main>
      </div>

      <footer class="output">
        <span class="prompt"></span>
        <pre class="log">Job CompressionTest: Abaqus/Explicit aborted due to errors.
Error in job CompressionTest: Abaqus/Explicit Analysis exited with an error - Please see the status file for possible error messages if the file exists.</pre>
        <button class="more" aria-label="Scroll up">${icon("chevronUp")}</button>
      </footer>`;
  }
}
